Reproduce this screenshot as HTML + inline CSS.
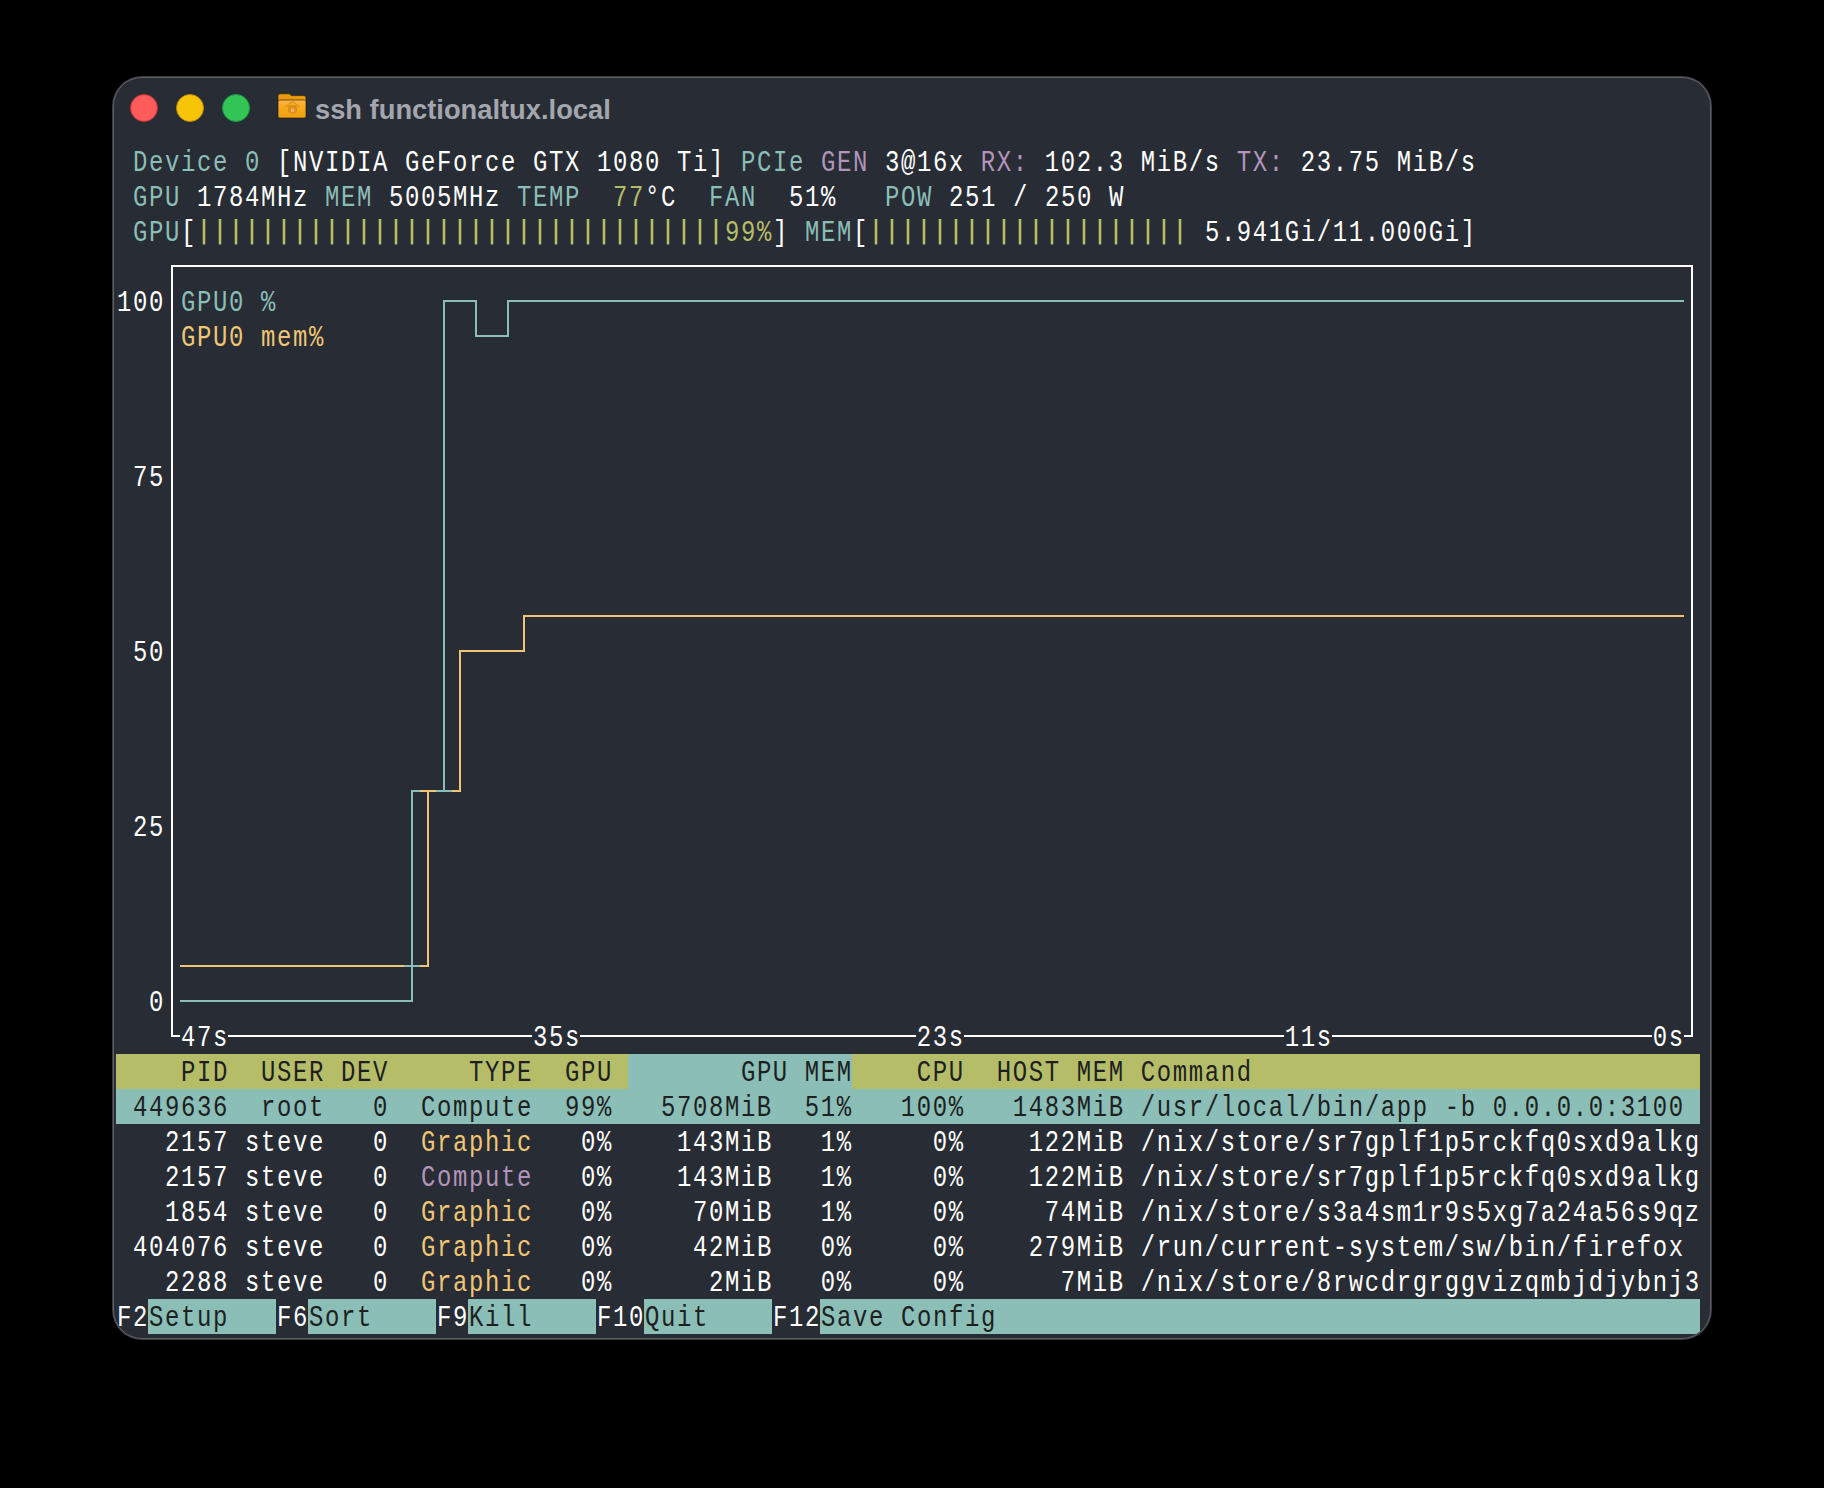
<!DOCTYPE html>
<html><head><meta charset="utf-8">
<style>
html,body{margin:0;padding:0;background:#000;width:1824px;height:1488px;overflow:hidden;}
.win{position:absolute;left:113px;top:77px;width:1598px;height:1262px;box-sizing:border-box;background:#282c34;border:1px solid #606166;box-shadow:0 0 0 1px rgba(96,97,102,0.6);border-radius:29px;overflow:hidden;}
.term{position:absolute;left:0;top:0;width:1824px;height:1488px;clip-path:inset(78px 114px 150px 114px round 28px);}
.r{position:absolute;left:116.8px;height:35px;line-height:40.5px;white-space:pre;font-family:"Liberation Mono",monospace;font-size:28.6px;letter-spacing:1.9517px;color:#ffffff;transform:scaleX(0.83706);transform-origin:0 0;}
.bg{position:absolute;height:35px;}
.ov{position:absolute;left:0;top:0;}
.dot{position:absolute;width:28px;height:28px;border-radius:50%;box-sizing:border-box;}
.title{position:absolute;left:315px;top:94px;font-family:"Liberation Sans",sans-serif;font-weight:bold;font-size:27.3px;color:#a3a6ae;white-space:pre;}
</style></head><body>
<div class="win"></div>
<div class="dot" style="left:130px;top:94px;background:#ff5a5c;border:1px solid #c9303a;"></div>
<div class="dot" style="left:176px;top:94px;background:#f8c408;border:1px solid #b88d0a;"></div>
<div class="dot" style="left:222px;top:94px;background:#33c657;border:1px solid #1f9a3c;"></div>
<svg style="position:absolute;left:272px;top:88px" width="40" height="36" viewBox="0 0 40 36">
<defs><linearGradient id="fg" x1="0" y1="0" x2="0" y2="1"><stop offset="0" stop-color="#ffb74a"/><stop offset="0.35" stop-color="#f9aa22"/><stop offset="1" stop-color="#eea10e"/></linearGradient></defs>
<path d="M6 8 Q6 5.8 8.2 5.8 H17.2 L19.4 7.6 H31.8 Q34 7.6 34 9.8 V14 H6 Z" fill="#e99b0d" stroke="#1a1208" stroke-width="0.6"/>
<rect x="6" y="12" width="28" height="18" rx="1.8" fill="url(#fg)" stroke="#1a1208" stroke-width="0.6"/>
<path d="M13.5 19 L20.5 13.5 L27.5 19" fill="none" stroke="#dd9418" stroke-width="1.6" opacity="0.8"/>
<rect x="16" y="17" width="9" height="8.5" rx="3" fill="#d68c14" opacity="0.85"/>
<rect x="19" y="20.5" width="3.2" height="3.6" fill="#f4ad6a"/>
</svg>
<div class="title">ssh functionaltux.local</div>
<div class="term">
<div class="r" style="top:144px"> <span style="color:#8abeb7">Device 0 </span><span style="color:#ffffff">[NVIDIA GeForce GTX 1080 Ti] </span><span style="color:#8abeb7">PCIe </span><span style="color:#b294bb">GEN </span><span style="color:#ffffff">3@16x </span><span style="color:#b294bb">RX: </span><span style="color:#ffffff">102.3 MiB/s </span><span style="color:#b294bb">TX: </span><span style="color:#ffffff">23.75 MiB/s</span></div>
<div class="r" style="top:179px"> <span style="color:#8abeb7">GPU </span><span style="color:#ffffff">1784MHz </span><span style="color:#8abeb7">MEM </span><span style="color:#ffffff">5005MHz </span><span style="color:#8abeb7">TEMP  </span><span style="color:#b5bd68">77</span><span style="color:#ffffff">°C  </span><span style="color:#8abeb7">FAN  </span><span style="color:#ffffff">51%   </span><span style="color:#8abeb7">POW </span><span style="color:#ffffff">251 / 250 W</span></div>
<div class="r" style="top:214px"> <span style="color:#8abeb7">GPU</span><span style="color:#ffffff">[</span><span style="color:#b5bd68">                                 99%</span><span style="color:#ffffff">]</span> <span style="color:#8abeb7">MEM</span><span style="color:#ffffff">[</span>                    <span style="color:#ffffff"> 5.941Gi/11.000Gi]</span></div>
<div class="r" style="top:284px"><span style="color:#ffffff">100</span> <span style="color:#8abeb7">GPU0 %</span></div>
<div class="r" style="top:319px">    <span style="color:#f0c674">GPU0 mem%</span></div>
<div class="r" style="top:459px"><span style="color:#ffffff"> 75</span></div>
<div class="r" style="top:634px"><span style="color:#ffffff"> 50</span></div>
<div class="r" style="top:809px"><span style="color:#ffffff"> 25</span></div>
<div class="r" style="top:984px"><span style="color:#ffffff">  0</span></div>
<div class="r" style="top:1019px"><span style="color:#ffffff">    47s</span>                   <span style="color:#ffffff">35s</span>                     <span style="color:#ffffff">23s</span>                    <span style="color:#ffffff">11s</span>                    <span style="color:#ffffff">0s</span></div>
<div class="bg" style="left:116px;top:1054px;width:512px;background:#b5bd68"></div>
<div class="bg" style="left:628px;top:1054px;width:224px;background:#8abeb7"></div>
<div class="bg" style="left:852px;top:1054px;width:848px;background:#b5bd68"></div>
<div class="r" style="top:1054px"><span style="color:#1d1f21">    PID  USER DEV     TYPE  GPU </span><span style="color:#1d1f21">       GPU MEM</span><span style="color:#1d1f21">    CPU  HOST MEM Command                            </span></div>
<div class="bg" style="left:116px;top:1089px;width:1584px;background:#8abeb7"></div>
<div class="r" style="top:1089px"><span style="color:#1d1f21"> 449636  root   0  Compute  99%   5708MiB  51%   100%   1483MiB /usr/local/bin/app -b 0.0.0.0:3100 </span></div>
<div class="r" style="top:1124px"><span style="color:#ffffff">   2157 steve   0  </span><span style="color:#f0c674">Graphic</span><span style="color:#ffffff">   0%    143MiB   1%     0%    122MiB /nix/store/sr7gplf1p5rckfq0sxd9alkg</span></div>
<div class="r" style="top:1159px"><span style="color:#ffffff">   2157 steve   0  </span><span style="color:#b294bb">Compute</span><span style="color:#ffffff">   0%    143MiB   1%     0%    122MiB /nix/store/sr7gplf1p5rckfq0sxd9alkg</span></div>
<div class="r" style="top:1194px"><span style="color:#ffffff">   1854 steve   0  </span><span style="color:#f0c674">Graphic</span><span style="color:#ffffff">   0%     70MiB   1%     0%     74MiB /nix/store/s3a4sm1r9s5xg7a24a56s9qz</span></div>
<div class="r" style="top:1229px"><span style="color:#ffffff"> 404076 steve   0  </span><span style="color:#f0c674">Graphic</span><span style="color:#ffffff">   0%     42MiB   0%     0%    279MiB /run/current-system/sw/bin/firefox</span></div>
<div class="r" style="top:1264px"><span style="color:#ffffff">   2288 steve   0  </span><span style="color:#f0c674">Graphic</span><span style="color:#ffffff">   0%      2MiB   0%     0%      7MiB /nix/store/8rwcdrgrggvizqmbjdjybnj3</span></div>
<div class="bg" style="left:148px;top:1299px;width:128px;background:#8abeb7"></div>
<div class="bg" style="left:308px;top:1299px;width:128px;background:#8abeb7"></div>
<div class="bg" style="left:468px;top:1299px;width:128px;background:#8abeb7"></div>
<div class="bg" style="left:644px;top:1299px;width:128px;background:#8abeb7"></div>
<div class="bg" style="left:820px;top:1299px;width:880px;background:#8abeb7"></div>
<div class="r" style="top:1299px"><span style="color:#ffffff">F2</span><span style="color:#1d1f21">Setup   </span><span style="color:#ffffff">F6</span><span style="color:#1d1f21">Sort    </span><span style="color:#ffffff">F9</span><span style="color:#1d1f21">Kill    </span><span style="color:#ffffff">F10</span><span style="color:#1d1f21">Quit    </span><span style="color:#ffffff">F12</span><span style="color:#1d1f21">Save Config                                            </span></div>
<svg class="ov" width="1824" height="1488" viewBox="0 0 1824 1488" fill="none" stroke-width="2" shape-rendering="crispEdges"><path d="M171 266H1693" stroke="#ffffff"/><path d="M172 266V1036" stroke="#ffffff"/><path d="M1692 266V1036" stroke="#ffffff"/><path d="M171 1036H180" stroke="#ffffff"/><path d="M228 1036H532" stroke="#ffffff"/><path d="M580 1036H916" stroke="#ffffff"/><path d="M964 1036H1284" stroke="#ffffff"/><path d="M1332 1036H1652" stroke="#ffffff"/><path d="M1684 1036H1693" stroke="#ffffff"/><path d="M180 966H428V791H460V651H524V616H1684" stroke="#f0c674" stroke-linejoin="miter"/><path d="M180 1001H412V791H444V301H476V336H508V301H1684" stroke="#8abeb7" stroke-linejoin="miter"/><path d="M420 791H436" stroke="#f0c674"/><path d="M436 791H452" stroke="#8abeb7"/><path d="M404 966H420" stroke="#8abeb7"/><rect x="202.7" y="219" width="2.6" height="25.5" fill="#b5bd68" stroke="none" shape-rendering="auto"/><rect x="218.7" y="219" width="2.6" height="25.5" fill="#b5bd68" stroke="none" shape-rendering="auto"/><rect x="234.7" y="219" width="2.6" height="25.5" fill="#b5bd68" stroke="none" shape-rendering="auto"/><rect x="250.7" y="219" width="2.6" height="25.5" fill="#b5bd68" stroke="none" shape-rendering="auto"/><rect x="266.7" y="219" width="2.6" height="25.5" fill="#b5bd68" stroke="none" shape-rendering="auto"/><rect x="282.7" y="219" width="2.6" height="25.5" fill="#b5bd68" stroke="none" shape-rendering="auto"/><rect x="298.7" y="219" width="2.6" height="25.5" fill="#b5bd68" stroke="none" shape-rendering="auto"/><rect x="314.7" y="219" width="2.6" height="25.5" fill="#b5bd68" stroke="none" shape-rendering="auto"/><rect x="330.7" y="219" width="2.6" height="25.5" fill="#b5bd68" stroke="none" shape-rendering="auto"/><rect x="346.7" y="219" width="2.6" height="25.5" fill="#b5bd68" stroke="none" shape-rendering="auto"/><rect x="362.7" y="219" width="2.6" height="25.5" fill="#b5bd68" stroke="none" shape-rendering="auto"/><rect x="378.7" y="219" width="2.6" height="25.5" fill="#b5bd68" stroke="none" shape-rendering="auto"/><rect x="394.7" y="219" width="2.6" height="25.5" fill="#b5bd68" stroke="none" shape-rendering="auto"/><rect x="410.7" y="219" width="2.6" height="25.5" fill="#b5bd68" stroke="none" shape-rendering="auto"/><rect x="426.7" y="219" width="2.6" height="25.5" fill="#b5bd68" stroke="none" shape-rendering="auto"/><rect x="442.7" y="219" width="2.6" height="25.5" fill="#b5bd68" stroke="none" shape-rendering="auto"/><rect x="458.7" y="219" width="2.6" height="25.5" fill="#b5bd68" stroke="none" shape-rendering="auto"/><rect x="474.7" y="219" width="2.6" height="25.5" fill="#b5bd68" stroke="none" shape-rendering="auto"/><rect x="490.7" y="219" width="2.6" height="25.5" fill="#b5bd68" stroke="none" shape-rendering="auto"/><rect x="506.7" y="219" width="2.6" height="25.5" fill="#b5bd68" stroke="none" shape-rendering="auto"/><rect x="522.7" y="219" width="2.6" height="25.5" fill="#b5bd68" stroke="none" shape-rendering="auto"/><rect x="538.7" y="219" width="2.6" height="25.5" fill="#b5bd68" stroke="none" shape-rendering="auto"/><rect x="554.7" y="219" width="2.6" height="25.5" fill="#b5bd68" stroke="none" shape-rendering="auto"/><rect x="570.7" y="219" width="2.6" height="25.5" fill="#b5bd68" stroke="none" shape-rendering="auto"/><rect x="586.7" y="219" width="2.6" height="25.5" fill="#b5bd68" stroke="none" shape-rendering="auto"/><rect x="602.7" y="219" width="2.6" height="25.5" fill="#b5bd68" stroke="none" shape-rendering="auto"/><rect x="618.7" y="219" width="2.6" height="25.5" fill="#b5bd68" stroke="none" shape-rendering="auto"/><rect x="634.7" y="219" width="2.6" height="25.5" fill="#b5bd68" stroke="none" shape-rendering="auto"/><rect x="650.7" y="219" width="2.6" height="25.5" fill="#b5bd68" stroke="none" shape-rendering="auto"/><rect x="666.7" y="219" width="2.6" height="25.5" fill="#b5bd68" stroke="none" shape-rendering="auto"/><rect x="682.7" y="219" width="2.6" height="25.5" fill="#b5bd68" stroke="none" shape-rendering="auto"/><rect x="698.7" y="219" width="2.6" height="25.5" fill="#b5bd68" stroke="none" shape-rendering="auto"/><rect x="714.7" y="219" width="2.6" height="25.5" fill="#b5bd68" stroke="none" shape-rendering="auto"/><rect x="874.7" y="219" width="2.6" height="25.5" fill="#b5bd68" stroke="none" shape-rendering="auto"/><rect x="890.7" y="219" width="2.6" height="25.5" fill="#b5bd68" stroke="none" shape-rendering="auto"/><rect x="906.7" y="219" width="2.6" height="25.5" fill="#b5bd68" stroke="none" shape-rendering="auto"/><rect x="922.7" y="219" width="2.6" height="25.5" fill="#b5bd68" stroke="none" shape-rendering="auto"/><rect x="938.7" y="219" width="2.6" height="25.5" fill="#b5bd68" stroke="none" shape-rendering="auto"/><rect x="954.7" y="219" width="2.6" height="25.5" fill="#b5bd68" stroke="none" shape-rendering="auto"/><rect x="970.7" y="219" width="2.6" height="25.5" fill="#b5bd68" stroke="none" shape-rendering="auto"/><rect x="986.7" y="219" width="2.6" height="25.5" fill="#b5bd68" stroke="none" shape-rendering="auto"/><rect x="1002.7" y="219" width="2.6" height="25.5" fill="#b5bd68" stroke="none" shape-rendering="auto"/><rect x="1018.7" y="219" width="2.6" height="25.5" fill="#b5bd68" stroke="none" shape-rendering="auto"/><rect x="1034.7" y="219" width="2.6" height="25.5" fill="#b5bd68" stroke="none" shape-rendering="auto"/><rect x="1050.7" y="219" width="2.6" height="25.5" fill="#b5bd68" stroke="none" shape-rendering="auto"/><rect x="1066.7" y="219" width="2.6" height="25.5" fill="#b5bd68" stroke="none" shape-rendering="auto"/><rect x="1082.7" y="219" width="2.6" height="25.5" fill="#b5bd68" stroke="none" shape-rendering="auto"/><rect x="1098.7" y="219" width="2.6" height="25.5" fill="#b5bd68" stroke="none" shape-rendering="auto"/><rect x="1114.7" y="219" width="2.6" height="25.5" fill="#b5bd68" stroke="none" shape-rendering="auto"/><rect x="1130.7" y="219" width="2.6" height="25.5" fill="#b5bd68" stroke="none" shape-rendering="auto"/><rect x="1146.7" y="219" width="2.6" height="25.5" fill="#b5bd68" stroke="none" shape-rendering="auto"/><rect x="1162.7" y="219" width="2.6" height="25.5" fill="#b5bd68" stroke="none" shape-rendering="auto"/><rect x="1178.7" y="219" width="2.6" height="25.5" fill="#b5bd68" stroke="none" shape-rendering="auto"/></svg>
</div>
</body></html>
